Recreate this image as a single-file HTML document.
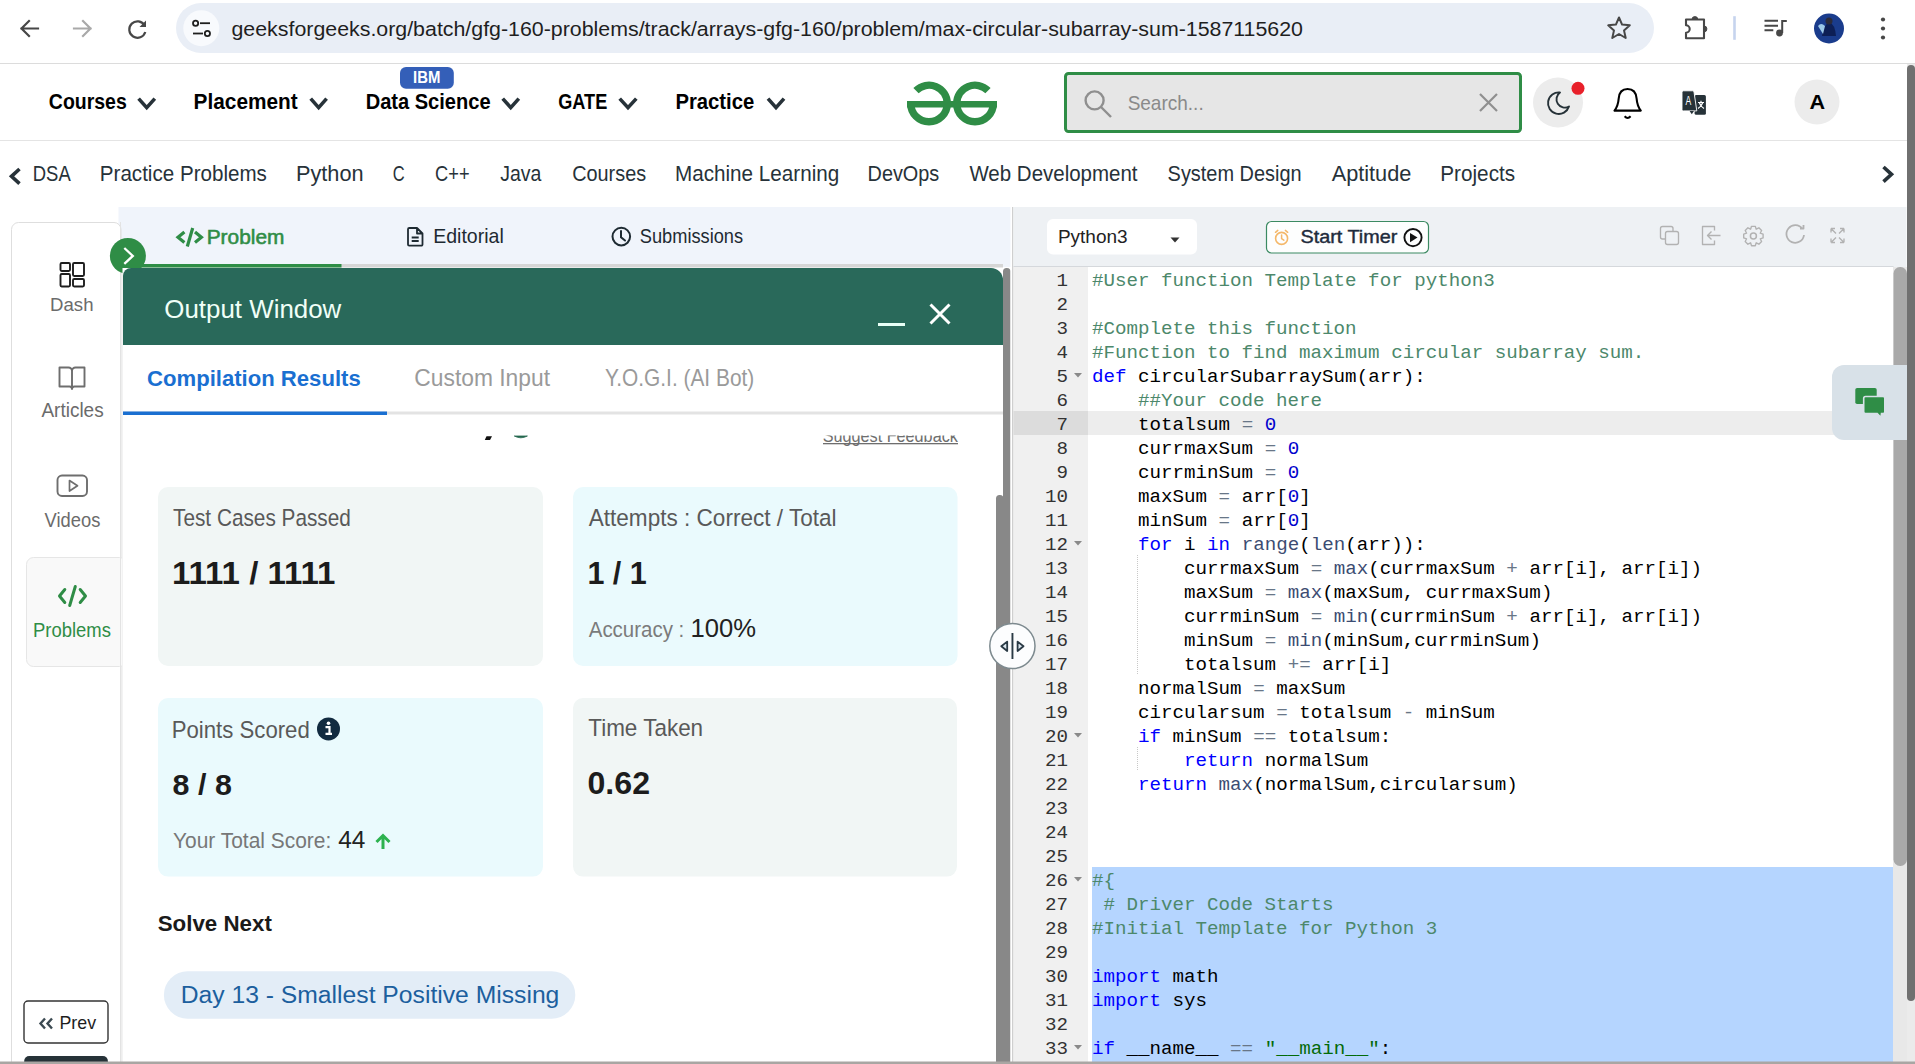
<!DOCTYPE html>
<html><head><meta charset="utf-8"><title>GfG Practice</title>
<style>html,body{margin:0;padding:0;background:#fff;overflow:hidden;width:1915px;height:1064px}svg{display:block}</style>
</head><body>
<svg width="1915" height="1064" viewBox="0 0 1915 1064">
<rect x="0" y="0" width="1915" height="1064" rx="0" fill="#ffffff" />
<rect x="0" y="63" width="1915" height="1" rx="0" fill="#dcdcdc" />
<path d="M38 28.5H21.5M29 21L21.5 28.5L29 36" fill="none" stroke="#474747" stroke-width="2.2" stroke-linecap="square" stroke-linejoin="miter"/>
<path d="M74 28.5H90.5M83 21L90.5 28.5L83 36" fill="none" stroke="#a9a9a9" stroke-width="2.2" stroke-linecap="square"/>
<path d="M144.6 25.5A8.2 8.2 0 1 0 145.3 32" fill="none" stroke="#474747" stroke-width="2.2" />
<path d="M146 20.5V27H139.5Z" fill="#474747" />
<rect x="176" y="3" width="1478" height="50" rx="25" fill="#e9eef6" />
<circle cx="201.3" cy="28.2" r="18" fill="#f8fafd" />
<circle cx="195.6" cy="23.2" r="2.6" fill="none" stroke="#1f1f1f" stroke-width="1.8" />
<path d="M200 23.2H210" fill="none" stroke="#1f1f1f" stroke-width="1.8" />
<path d="M193 33.5H203" fill="none" stroke="#1f1f1f" stroke-width="1.8" />
<circle cx="207.4" cy="33.5" r="2.6" fill="none" stroke="#1f1f1f" stroke-width="1.8" />
<text x="231.49" y="35.80" font-family='"Liberation Sans", sans-serif' font-size="21.08" font-weight="400" fill="#1f1f1f" textLength="1071.51" lengthAdjust="spacingAndGlyphs" >geeksforgeeks.org/batch/gfg-160-problems/track/arrays-gfg-160/problem/max-circular-subarray-sum-1587115620</text>
<path d="M1619 17.5L1622.1 24.6L1629.8 25.3L1624 30.4L1625.7 38L1619 34L1612.3 38L1614 30.4L1608.2 25.3L1615.9 24.6Z" fill="none" stroke="#474747" stroke-width="2" stroke-linejoin="round"/>
<path d="M1686 19.5H1704V38.2H1686V32.7A3.7 3.7 0 0 0 1686 25.3Z" fill="none" stroke="#474747" stroke-width="2.1" stroke-linejoin="round"/>
<path d="M1692 19.5A2.9 2.9 0 0 1 1697.8 19.5Z M1704 26A2.9 2.9 0 0 1 1704 31.8Z" fill="#474747" stroke="#474747" stroke-width="1" />
<rect x="1733.2" y="16.2" width="2.6" height="23.6" rx="0" fill="#c6d4ee" />
<path d="M1764.5 20.8H1778M1764.5 25.7H1778M1764.5 30.2H1773.3M1782.2 33V20.9H1786.8" fill="none" stroke="#474747" stroke-width="2" />
<circle cx="1779.5" cy="33" r="3.4" fill="#474747" />
<circle cx="1829" cy="28.5" r="15" fill="#1a3c8c" />
<path d="M1822 36Q1823 26 1829 22Q1835 24 1836 36Z" fill="#0d1f55" />
<circle cx="1829" cy="21" r="3.5" fill="#2b2b3a" />
<path d="M1818 26Q1821 22 1825 26L1823 34Z" fill="#9cc9e8" />
<circle cx="1883" cy="19.5" r="2.1" fill="#474747" />
<circle cx="1883" cy="28.5" r="2.1" fill="#474747" />
<circle cx="1883" cy="37.5" r="2.1" fill="#474747" />
<rect x="0" y="140" width="1907" height="1" rx="0" fill="#e4e4e4" />
<text x="48.82" y="108.80" font-family='"Liberation Sans", sans-serif' font-size="21.80" font-weight="700" fill="#000000" textLength="77.99" lengthAdjust="spacingAndGlyphs" >Courses</text>
<path d="M138.6 98.6L146.7 107.6L154.8 98.6" fill="none" stroke="#273239" stroke-width="3.6" />
<text x="193.60" y="108.80" font-family='"Liberation Sans", sans-serif' font-size="21.80" font-weight="700" fill="#000000" textLength="104.11" lengthAdjust="spacingAndGlyphs" >Placement</text>
<path d="M310.7 98.6L318.65 107.6L326.6 98.6" fill="none" stroke="#273239" stroke-width="3.6" />
<text x="365.64" y="108.80" font-family='"Liberation Sans", sans-serif' font-size="21.80" font-weight="700" fill="#000000" textLength="125.02" lengthAdjust="spacingAndGlyphs" >Data Science</text>
<path d="M502.7 98.6L510.75 107.6L518.8 98.6" fill="none" stroke="#273239" stroke-width="3.6" />
<text x="558.27" y="108.80" font-family='"Liberation Sans", sans-serif' font-size="21.80" font-weight="700" fill="#000000" textLength="49.03" lengthAdjust="spacingAndGlyphs" >GATE</text>
<path d="M619.7 98.6L628.0 107.6L636.3 98.6" fill="none" stroke="#273239" stroke-width="3.6" />
<text x="675.43" y="108.80" font-family='"Liberation Sans", sans-serif' font-size="21.80" font-weight="700" fill="#000000" textLength="78.86" lengthAdjust="spacingAndGlyphs" >Practice</text>
<path d="M768.0 98.6L776.0 107.6L784.0 98.6" fill="none" stroke="#273239" stroke-width="3.6" />
<rect x="400" y="66.9" width="53.8" height="21.8" rx="6" fill="#345fb8" />
<text x="413.00" y="83.00" font-family='"Liberation Sans", sans-serif' font-size="16.13" font-weight="700" fill="#ffffff" textLength="27.28" lengthAdjust="spacingAndGlyphs" >IBM</text>
<g fill="none" stroke="#2f8d46" stroke-width="7.4">
<path d="M910.7 103.5A18.3 18.3 0 0 0 947.3 103.5A18.3 18.3 0 0 0 916 90.6" fill="none" />
<path d="M993.3 103.5A18.3 18.3 0 0 1 956.7 103.5A18.3 18.3 0 0 1 988 90.6" fill="none" />
</g>
<rect x="907" y="101" width="90" height="6.5" rx="0" fill="#2f8d46" />
<rect x="1065.5" y="73.5" width="455" height="58" rx="3" fill="#e6e6e6" stroke="#2f8d46" stroke-width="3"/>
<circle cx="1094.6" cy="100.4" r="9" fill="none" stroke="#8f8f8f" stroke-width="2.4" />
<path d="M1101 107L1111 117" fill="none" stroke="#8f8f8f" stroke-width="2.4" />
<text x="1127.64" y="109.80" font-family='"Liberation Sans", sans-serif' font-size="20.06" font-weight="400" fill="#8a8a8a" textLength="76.06" lengthAdjust="spacingAndGlyphs" >Search...</text>
<path d="M1480 94L1497 111M1497 94L1480 111" fill="none" stroke="#8f8f8f" stroke-width="2.2" />
<circle cx="1558" cy="102.5" r="25" fill="#ececec" />
<path d="M1560 92.5A10.76 10.76 0 1 0 1569 106.5A8.33 8.33 0 0 1 1560 92.5Z" fill="none" stroke="#263238" stroke-width="1.9" stroke-linejoin="round"/>
<circle cx="1578" cy="88.3" r="6.5" fill="#e8202a" />
<path d="M1614.5 110.6H1640.8Q1637.2 106 1636.6 98.5Q1635.8 89 1627.6 89Q1619.4 89 1618.7 98.5Q1618.1 106 1614.5 110.6Z" fill="none" stroke="#000" stroke-width="2.1" stroke-linejoin="round"/>
<path d="M1624.6 116.3Q1627.6 119.5 1630.6 116.3" fill="none" stroke="#000" stroke-width="2" />
<rect x="1694.6" y="94.9" width="11.3" height="19.8" rx="1.5" fill="#263238" />
<path d="M1683.5 90.8H1692.6A1.5 1.5 0 0 1 1694 92L1696.8 110.9H1683.5A1.5 1.5 0 0 1 1682 109.4V92.3A1.5 1.5 0 0 1 1683.5 90.8Z" fill="#263238" stroke="#fff" stroke-width="0.9" />
<path d="M1689.6 110.9L1691.8 114.2L1694 110.9Z" fill="#263238" />
<text x="1685.48" y="105.00" font-family='"Liberation Sans", sans-serif' font-size="13.08" font-weight="400" fill="#fff" textLength="5.74" lengthAdjust="spacingAndGlyphs" >A</text>
<path d="M1698 102.5H1704M1701 100.7V102.5M1699.2 102.5Q1700.5 106.5 1704 108.5M1702.8 102.5Q1701.5 106.5 1698 108.5" fill="none" stroke="#fff" stroke-width="1.2" />
<circle cx="1817" cy="102" r="22.5" fill="#ececec" />
<text x="1809.46" y="109.00" font-family='"Liberation Sans", sans-serif' font-size="19.62" font-weight="700" fill="#000" textLength="15.63" lengthAdjust="spacingAndGlyphs" >A</text>
<rect x="0" y="207" width="1907" height="0.01" rx="0" fill="#ffffff" />
<text x="32.78" y="181.30" font-family='"Liberation Sans", sans-serif' font-size="21.80" font-weight="400" fill="#273239" textLength="37.94" lengthAdjust="spacingAndGlyphs" >DSA</text>
<text x="99.80" y="181.30" font-family='"Liberation Sans", sans-serif' font-size="21.80" font-weight="400" fill="#273239" textLength="167.10" lengthAdjust="spacingAndGlyphs" >Practice Problems</text>
<text x="295.91" y="181.30" font-family='"Liberation Sans", sans-serif' font-size="21.80" font-weight="400" fill="#273239" textLength="67.67" lengthAdjust="spacingAndGlyphs" >Python</text>
<text x="392.67" y="181.30" font-family='"Liberation Sans", sans-serif' font-size="21.80" font-weight="400" fill="#273239" textLength="11.94" lengthAdjust="spacingAndGlyphs" >C</text>
<text x="435.09" y="181.30" font-family='"Liberation Sans", sans-serif' font-size="21.80" font-weight="400" fill="#273239" textLength="34.53" lengthAdjust="spacingAndGlyphs" >C++</text>
<text x="500.31" y="181.30" font-family='"Liberation Sans", sans-serif' font-size="21.80" font-weight="400" fill="#273239" textLength="41.09" lengthAdjust="spacingAndGlyphs" >Java</text>
<text x="572.21" y="181.30" font-family='"Liberation Sans", sans-serif' font-size="21.80" font-weight="400" fill="#273239" textLength="73.91" lengthAdjust="spacingAndGlyphs" >Courses</text>
<text x="675.00" y="181.30" font-family='"Liberation Sans", sans-serif' font-size="21.80" font-weight="400" fill="#273239" textLength="164.19" lengthAdjust="spacingAndGlyphs" >Machine Learning</text>
<text x="867.56" y="181.30" font-family='"Liberation Sans", sans-serif' font-size="21.80" font-weight="400" fill="#273239" textLength="71.73" lengthAdjust="spacingAndGlyphs" >DevOps</text>
<text x="969.40" y="181.30" font-family='"Liberation Sans", sans-serif' font-size="21.80" font-weight="400" fill="#273239" textLength="168.17" lengthAdjust="spacingAndGlyphs" >Web Development</text>
<text x="1167.60" y="181.30" font-family='"Liberation Sans", sans-serif' font-size="21.80" font-weight="400" fill="#273239" textLength="134.09" lengthAdjust="spacingAndGlyphs" >System Design</text>
<text x="1331.65" y="181.30" font-family='"Liberation Sans", sans-serif' font-size="21.80" font-weight="400" fill="#273239" textLength="79.72" lengthAdjust="spacingAndGlyphs" >Aptitude</text>
<text x="1440.29" y="181.30" font-family='"Liberation Sans", sans-serif' font-size="21.80" font-weight="400" fill="#273239" textLength="74.83" lengthAdjust="spacingAndGlyphs" >Projects</text>
<path d="M19.5 169L11.5 176.3L19.5 183.6" fill="none" stroke="#273239" stroke-width="3.6" />
<path d="M1883.5 167L1891.5 174.3L1883.5 181.6" fill="none" stroke="#273239" stroke-width="3.6" />
<rect x="1907" y="64" width="8" height="1000" rx="0" fill="#ebebeb" />
<rect x="1907" y="65" width="8" height="936" rx="4" fill="#707070" />
<rect x="118.5" y="207" width="893.5" height="60" rx="0" fill="#f0f4fb" />
<rect x="11.5" y="222.5" width="109.5" height="850" rx="7" fill="#ffffff" stroke="#dedede" stroke-width="1"/>
<g fill="none" stroke="#1e1e1e" stroke-width="1.9">
<rect x="60.5" y="263" width="9.5" height="8" rx="1.2" fill="none" />
<rect x="73" y="263" width="11" height="13" rx="1.2" fill="none" />
<rect x="60.5" y="274" width="9.5" height="12.5" rx="1.2" fill="none" />
<rect x="73" y="279" width="11" height="7.5" rx="1.2" fill="none" />
</g>
<text x="50.07" y="311.30" font-family='"Liberation Sans", sans-serif' font-size="18.90" font-weight="400" fill="#6b6b6b" textLength="43.44" lengthAdjust="spacingAndGlyphs" >Dash</text>
<path d="M59.5 367.5H68.5A3.5 3.5 0 0 1 72 371V389A2.5 2.5 0 0 0 69.5 386.5H59.5Z M84.5 367.5H75.5A3.5 3.5 0 0 0 72 371V389A2.5 2.5 0 0 1 74.5 386.5H84.5Z" fill="none" stroke="#6e6e6e" stroke-width="1.9" stroke-linejoin="round"/>
<text x="41.45" y="416.70" font-family='"Liberation Sans", sans-serif' font-size="19.48" font-weight="400" fill="#6b6b6b" textLength="62.23" lengthAdjust="spacingAndGlyphs" >Articles</text>
<rect x="57.5" y="475.5" width="29.5" height="20.5" rx="4.5" fill="none" stroke="#6e6e6e" stroke-width="1.9"/>
<path d="M69.5 480.5L77.5 485.7L69.5 491Z" fill="none" stroke="#6e6e6e" stroke-width="1.7" stroke-linejoin="round"/>
<text x="44.61" y="527.00" font-family='"Liberation Sans", sans-serif' font-size="21.08" font-weight="400" fill="#6b6b6b" textLength="55.73" lengthAdjust="spacingAndGlyphs" >Videos</text>
<rect x="26.5" y="557.5" width="100" height="109" rx="7" fill="#f9f9f9" stroke="#e6e6e6" stroke-width="1"/>
<path d="M64.8 589.5L59.5 596L64.8 602.5 M80.2 589.5L85.5 596L80.2 602.5 M75.3 586.5L69.7 605.5" fill="none" stroke="#2f8d46" stroke-width="3" stroke-linecap="round" stroke-linejoin="round"/>
<text x="32.98" y="637.10" font-family='"Liberation Sans", sans-serif' font-size="19.48" font-weight="400" fill="#2f8d46" textLength="77.89" lengthAdjust="spacingAndGlyphs" >Problems</text>
<rect x="24" y="1001" width="84" height="42" rx="4" fill="#ffffff" stroke="#333" stroke-width="1.4"/>
<path d="M45 1018.5L40.5 1023.5L45 1028.5 M52 1018.5L47.5 1023.5L52 1028.5" fill="none" stroke="#3c4a52" stroke-width="2.4" />
<text x="59.43" y="1028.70" font-family='"Liberation Sans", sans-serif' font-size="17.88" font-weight="400" fill="#1e1e1e" textLength="36.64" lengthAdjust="spacingAndGlyphs" >Prev</text>
<rect x="24.2" y="1056" width="83.7" height="12" rx="5" fill="#263238" />
<rect x="120" y="222" width="1" height="860" rx="0" fill="#e3e3e3" />
<rect x="122" y="268" width="1" height="800" rx="0" fill="#e6e6e6" />
<rect x="122" y="264" width="881" height="3.5" rx="0" fill="#d6d6d6" />
<rect x="122" y="264" width="219.5" height="3.5" rx="0" fill="#2f8d46" />
<path d="M184.4 232L178 237.3L184.4 242.5 M195 232L201.4 237.3L195 242.5" fill="none" stroke="#2f8d46" stroke-width="3.2" stroke-linejoin="miter"/>
<path d="M192.7 228L187.3 246.5" fill="none" stroke="#2f8d46" stroke-width="3.2" />
<text x="206.68" y="243.90" font-family='"Liberation Sans", sans-serif' font-size="19.77" font-weight="400" fill="#2f8d46" textLength="77.70" lengthAdjust="spacingAndGlyphs" stroke="#2f8d46" stroke-width="0.55">Problem</text>
<path d="M409 228H417L422.5 233.5V244.5A1.2 1.2 0 0 1 421.3 245.7H409.2A1.2 1.2 0 0 1 408 244.5V229.2A1.2 1.2 0 0 1 409.2 228Z M417 228V233.5H422.5 M411.7 237.5H418.7 M411.7 241H418.7" fill="none" stroke="#1e2a32" stroke-width="1.8" stroke-linejoin="round"/>
<text x="433.19" y="243.20" font-family='"Liberation Sans", sans-serif' font-size="19.62" font-weight="400" fill="#1e2a32" textLength="70.54" lengthAdjust="spacingAndGlyphs" >Editorial</text>
<circle cx="621.3" cy="236.6" r="8.8" fill="none" stroke="#1e2a32" stroke-width="2" />
<path d="M621 231V237.2L625 240.5" fill="none" stroke="#1e2a32" stroke-width="2" stroke-linecap="round"/>
<text x="639.78" y="243.20" font-family='"Liberation Sans", sans-serif' font-size="19.62" font-weight="400" fill="#1e2a32" textLength="103.34" lengthAdjust="spacingAndGlyphs" >Submissions</text>
<circle cx="127.9" cy="255.9" r="18" fill="#2f8d46" />
<path d="M124.3 248L132.8 255.9L124.3 263.8" fill="none" stroke="#ffffff" stroke-width="2.3" />
<rect x="122.5" y="268" width="880.5" height="800" rx="0" fill="#ffffff" />
<path d="M123 345V276A8 8 0 0 1 131 268H991A12 12 0 0 1 1003 280V345Z" fill="#29695a" />
<text x="164.27" y="317.80" font-family='"Liberation Sans", sans-serif' font-size="25.87" font-weight="400" fill="#f0fff7" textLength="177.04" lengthAdjust="spacingAndGlyphs" >Output Window</text>
<rect x="878" y="323" width="27" height="3" rx="0" fill="#e8fff6" />
<path d="M930.5 304.5L949.5 323.5M949.5 304.5L930.5 323.5" fill="none" stroke="#ffffff" stroke-width="3" />
<text x="147.12" y="385.70" font-family='"Liberation Sans", sans-serif' font-size="22.82" font-weight="700" fill="#1a6fd1" textLength="213.57" lengthAdjust="spacingAndGlyphs" >Compilation Results</text>
<text x="414.36" y="386.40" font-family='"Liberation Sans", sans-serif' font-size="23.84" font-weight="400" fill="#9a9a9a" textLength="135.61" lengthAdjust="spacingAndGlyphs" >Custom Input</text>
<text x="605.03" y="386.40" font-family='"Liberation Sans", sans-serif' font-size="23.84" font-weight="400" fill="#9a9a9a" textLength="149.23" lengthAdjust="spacingAndGlyphs" >Y.O.G.I. (AI Bot)</text>
<rect x="123" y="411.5" width="880" height="3" rx="0" fill="#e3e3e3" />
<rect x="123" y="411.5" width="264" height="3.5" rx="0" fill="#1a6fd1" />
<clipPath id="cp1"><rect x="123" y="435.5" width="880" height="40"/></clipPath>
<g clip-path="url(#cp1)">
<text x="822.67" y="441.70" font-family='"Liberation Sans", sans-serif' font-size="17.73" font-weight="400" fill="#6e6e6e" textLength="135.22" lengthAdjust="spacingAndGlyphs" >Suggest Feedback</text>
<rect x="823" y="443" width="135" height="1.3" rx="0" fill="#6e6e6e" />
</g>
<path d="M486.5 436.2H492L490 440H484.8Z" fill="#111" />
<path d="M514.3 436Q520.8 439.6 527.4 436Z" fill="#25684f" stroke="#25684f" stroke-width="0.8" />
<rect x="158" y="487" width="385" height="179" rx="10" fill="#f1f6f5" />
<rect x="573" y="487" width="384.5" height="179" rx="10" fill="#eafafd" />
<rect x="158" y="698" width="385" height="178.6" rx="10" fill="#eafafd" />
<rect x="573" y="698" width="384" height="178.6" rx="10" fill="#f1f6f5" />
<text x="173.03" y="526.00" font-family='"Liberation Sans", sans-serif' font-size="23.69" font-weight="400" fill="#595959" textLength="177.81" lengthAdjust="spacingAndGlyphs" >Test Cases Passed</text>
<text x="171.94" y="584.20" font-family='"Liberation Sans", sans-serif' font-size="31.10" font-weight="700" fill="#1c1c1c" textLength="163.56" lengthAdjust="spacingAndGlyphs" >1111 / 1111</text>
<text x="588.74" y="526.00" font-family='"Liberation Sans", sans-serif' font-size="23.69" font-weight="400" fill="#595959" textLength="247.80" lengthAdjust="spacingAndGlyphs" >Attempts : Correct / Total</text>
<text x="587.39" y="584.20" font-family='"Liberation Sans", sans-serif' font-size="31.10" font-weight="700" fill="#1c1c1c" textLength="59.40" lengthAdjust="spacingAndGlyphs" >1 / 1</text>
<text x="588.75" y="636.70" font-family='"Liberation Sans", sans-serif' font-size="22.82" font-weight="400" fill="#7b7b7b" textLength="95.50" lengthAdjust="spacingAndGlyphs" >Accuracy :</text>
<text x="690.58" y="636.70" font-family='"Liberation Sans", sans-serif' font-size="25.00" font-weight="400" fill="#222222" textLength="65.52" lengthAdjust="spacingAndGlyphs" >100%</text>
<text x="171.67" y="738.10" font-family='"Liberation Sans", sans-serif' font-size="23.69" font-weight="400" fill="#595959" textLength="138.13" lengthAdjust="spacingAndGlyphs" >Points Scored</text>
<circle cx="328.5" cy="728.9" r="11.5" fill="#122b40" />
<circle cx="328.5" cy="723.3" r="1.8" fill="#fff" />
<path d="M325.5 727.2H329.5V733.5M325.5 733.8H332" fill="none" stroke="#fff" stroke-width="2.2" />
<text x="172.59" y="795.30" font-family='"Liberation Sans", sans-serif' font-size="29.51" font-weight="700" fill="#1c1c1c" textLength="59.25" lengthAdjust="spacingAndGlyphs" >8 / 8</text>
<text x="173.03" y="847.70" font-family='"Liberation Sans", sans-serif' font-size="21.80" font-weight="400" fill="#777777" textLength="158.27" lengthAdjust="spacingAndGlyphs" >Your Total Score:</text>
<text x="338.25" y="847.70" font-family='"Liberation Sans", sans-serif' font-size="23.26" font-weight="400" fill="#222222" textLength="27.18" lengthAdjust="spacingAndGlyphs" >44</text>
<path d="M383 849V836M376.5 842L383 835.5L389.5 842" fill="none" stroke="#2db24f" stroke-width="3" />
<text x="588.29" y="736.00" font-family='"Liberation Sans", sans-serif' font-size="23.69" font-weight="400" fill="#595959" textLength="114.83" lengthAdjust="spacingAndGlyphs" >Time Taken</text>
<text x="587.51" y="793.80" font-family='"Liberation Sans", sans-serif' font-size="30.52" font-weight="700" fill="#1c1c1c" textLength="62.53" lengthAdjust="spacingAndGlyphs" >0.62</text>
<text x="157.69" y="930.80" font-family='"Liberation Sans", sans-serif' font-size="22.38" font-weight="700" fill="#1a1a1a" textLength="114.16" lengthAdjust="spacingAndGlyphs" >Solve Next</text>
<rect x="163.9" y="971.2" width="411.4" height="47.5" rx="23.75" fill="#e3edf7" />
<text x="180.66" y="1002.50" font-family='"Liberation Sans", sans-serif' font-size="23.98" font-weight="400" fill="#1c5f9e" textLength="378.71" lengthAdjust="spacingAndGlyphs" >Day 13 - Smallest Positive Missing</text>
<rect x="1003" y="268" width="7.5" height="800" rx="3.5" fill="#888888" />
<rect x="996" y="495" width="7.5" height="600" rx="3.5" fill="#888888" />
<rect x="1010.5" y="207" width="1.5" height="860" rx="0" fill="#ffffff" />
<rect x="1012" y="207" width="1.5" height="860" rx="0" fill="#cfcfcf" />
<rect x="1013.5" y="207" width="893" height="60" rx="0" fill="#eef1f4" />
<path d="M1013.5 207H1898A8 8 0 0 1 1906 215V266H1013.5Z" fill="#eef1f4" />
<rect x="1013.5" y="266" width="880" height="1" rx="0" fill="#d5d8dc" />
<rect x="1047" y="219" width="150" height="35.5" rx="6" fill="#ffffff" />
<text x="1057.93" y="243.00" font-family='"Liberation Sans", sans-serif' font-size="18.46" font-weight="400" fill="#222222" textLength="69.71" lengthAdjust="spacingAndGlyphs" >Python3</text>
<path d="M1170.5 237.5H1179.5L1175 242.5Z" fill="#333" />
<rect x="1266.5" y="221.5" width="162" height="31.5" rx="5" fill="#fdfefe" stroke="#3b8a62" stroke-width="1.2"/>
<circle cx="1281.6" cy="238.4" r="6" fill="none" stroke="#f4b86a" stroke-width="1.6" />
<path d="M1281.6 235V238.6L1283.8 240.2 M1275.5 232.3L1277.8 230.4 M1287.7 232.3L1285.4 230.4" fill="none" stroke="#f4b86a" stroke-width="1.5" stroke-linecap="round"/>
<text x="1300.51" y="243.00" font-family='"Liberation Sans", sans-serif' font-size="17.88" font-weight="400" fill="#1e2b3c" textLength="96.78" lengthAdjust="spacingAndGlyphs" stroke="#1e2b3c" stroke-width="0.4">Start Timer</text>
<circle cx="1413" cy="237.6" r="8.6" fill="none" stroke="#111" stroke-width="1.9" />
<path d="M1410 233L1417.5 237.6L1410 242.2Z" fill="#111" />
<g fill="none" stroke="#b2b2b2" stroke-width="1.35" stroke-linejoin="round">
<rect x="1660.5" y="226.5" width="12.5" height="12.5" rx="2" fill="none" />
<rect x="1665.5" y="231.5" width="13" height="13" rx="2" fill="#eef1f4" />
<path d="M1714.5 230.5V226.5H1702.5V244.5H1714.5V240.5 M1720.5 235.5H1707.5 M1711.5 231.5L1707.5 235.5L1711.5 239.5" fill="none" />
<path d="M1751.5 226.3L1755.3 226.3L1756.2 229.2L1758.9 227.8L1761.6 230.5L1760.2 233.2L1763.1 234.1V237.9L1760.2 238.8L1761.6 241.5L1758.9 244.2L1756.2 242.8L1755.3 245.7H1751.5L1750.6 242.8L1747.9 244.2L1745.2 241.5L1746.6 238.8L1743.7 237.9V234.1L1746.6 233.2L1745.2 230.5L1747.9 227.8L1750.6 229.2Z" fill="none" />
<circle cx="1753.4" cy="236" r="3" fill="none" stroke="#b2b2b2" stroke-width="1.5" />
<path d="M1802.5 229A8.8 8.8 0 1 0 1804 235 M1800 228.5H1803.5V225" fill="none" stroke-width="1.8"/>
<path d="M1831 228.5L1836 233.5M1831 228.5V232.5M1831 228.5H1835 M1844 228.5L1839 233.5M1844 228.5V232.5M1844 228.5H1840 M1831 242.5L1836 237.5M1831 242.5V238.5M1831 242.5H1835 M1844 242.5L1839 237.5M1844 242.5V238.5M1844 242.5H1840" fill="none" />
</g>
<rect x="1013.5" y="267" width="74.5" height="800" rx="0" fill="#f0f0f0" />
<rect x="1088" y="267" width="805" height="800" rx="0" fill="#ffffff" />
<rect x="1013.5" y="411" width="74.5" height="24" rx="0" fill="#dcdcdc" />
<rect x="1088" y="411" width="805" height="24" rx="0" fill="#ededed" />
<rect x="1092" y="867" width="801" height="200" rx="0" fill="#b5d5ff" />
<line x1="1137.5" y1="555" x2="1137.5" y2="579" stroke="#c8c8c8" stroke-width="1" stroke-dasharray="1 1"/>
<line x1="1137.5" y1="579" x2="1137.5" y2="603" stroke="#c8c8c8" stroke-width="1" stroke-dasharray="1 1"/>
<line x1="1137.5" y1="603" x2="1137.5" y2="627" stroke="#c8c8c8" stroke-width="1" stroke-dasharray="1 1"/>
<line x1="1137.5" y1="627" x2="1137.5" y2="651" stroke="#c8c8c8" stroke-width="1" stroke-dasharray="1 1"/>
<line x1="1137.5" y1="651" x2="1137.5" y2="675" stroke="#c8c8c8" stroke-width="1" stroke-dasharray="1 1"/>
<line x1="1137.5" y1="747" x2="1137.5" y2="771" stroke="#c8c8c8" stroke-width="1" stroke-dasharray="1 1"/>
<g font-family='"Liberation Mono", monospace' font-size="19.18" style="white-space:pre">
<text x="1068" y="285.8" text-anchor="end" fill="#333333">1</text>
<text y="285.8"><tspan x="1092.00" fill="rgb(76,136,107)">#User function Template for python3</tspan></text>
<text x="1068" y="309.8" text-anchor="end" fill="#333333">2</text>
<text x="1068" y="333.8" text-anchor="end" fill="#333333">3</text>
<text y="333.8"><tspan x="1092.00" fill="rgb(76,136,107)">#Complete this function</tspan></text>
<text x="1068" y="357.8" text-anchor="end" fill="#333333">4</text>
<text y="357.8"><tspan x="1092.00" fill="rgb(76,136,107)">#Function to find maximum circular subarray sum.</tspan></text>
<text x="1068" y="381.8" text-anchor="end" fill="#333333">5</text>
<text y="381.8"><tspan x="1092.00" fill="rgb(0,0,255)">def</tspan><tspan x="1138.04" fill="#000000">circularSubarraySum</tspan><tspan x="1356.73" fill="#000000">(</tspan><tspan x="1368.24" fill="#000000">arr</tspan><tspan x="1402.77" fill="#000000">)</tspan><tspan x="1414.28" fill="#000000">:</tspan></text>
<path d="M1074 373H1082L1078 377.5Z" fill="#8a8a8a"/>
<text x="1068" y="405.8" text-anchor="end" fill="#333333">6</text>
<text y="405.8"><tspan x="1138.04" fill="rgb(76,136,107)">##Your code here</tspan></text>
<text x="1068" y="429.8" text-anchor="end" fill="#333333">7</text>
<text y="429.8"><tspan x="1138.04" fill="#000000">totalsum</tspan><tspan x="1241.63" fill="rgb(104,118,135)">=</tspan><tspan x="1264.65" fill="rgb(0,0,205)">0</tspan></text>
<text x="1068" y="453.8" text-anchor="end" fill="#333333">8</text>
<text y="453.8"><tspan x="1138.04" fill="#000000">currmaxSum</tspan><tspan x="1264.65" fill="rgb(104,118,135)">=</tspan><tspan x="1287.67" fill="rgb(0,0,205)">0</tspan></text>
<text x="1068" y="477.8" text-anchor="end" fill="#333333">9</text>
<text y="477.8"><tspan x="1138.04" fill="#000000">currminSum</tspan><tspan x="1264.65" fill="rgb(104,118,135)">=</tspan><tspan x="1287.67" fill="rgb(0,0,205)">0</tspan></text>
<text x="1068" y="501.8" text-anchor="end" fill="#333333">10</text>
<text y="501.8"><tspan x="1138.04" fill="#000000">maxSum</tspan><tspan x="1218.61" fill="rgb(104,118,135)">=</tspan><tspan x="1241.63" fill="#000000">arr</tspan><tspan x="1276.16" fill="#000000">[</tspan><tspan x="1287.67" fill="rgb(0,0,205)">0</tspan><tspan x="1299.18" fill="#000000">]</tspan></text>
<text x="1068" y="525.8" text-anchor="end" fill="#333333">11</text>
<text y="525.8"><tspan x="1138.04" fill="#000000">minSum</tspan><tspan x="1218.61" fill="rgb(104,118,135)">=</tspan><tspan x="1241.63" fill="#000000">arr</tspan><tspan x="1276.16" fill="#000000">[</tspan><tspan x="1287.67" fill="rgb(0,0,205)">0</tspan><tspan x="1299.18" fill="#000000">]</tspan></text>
<text x="1068" y="549.8" text-anchor="end" fill="#333333">12</text>
<text y="549.8"><tspan x="1138.04" fill="rgb(0,0,255)">for</tspan><tspan x="1184.08" fill="#000000">i</tspan><tspan x="1207.10" fill="rgb(0,0,255)">in</tspan><tspan x="1241.63" fill="rgb(60,76,114)">range</tspan><tspan x="1299.18" fill="#000000">(</tspan><tspan x="1310.69" fill="rgb(60,76,114)">len</tspan><tspan x="1345.22" fill="#000000">(</tspan><tspan x="1356.73" fill="#000000">arr</tspan><tspan x="1391.26" fill="#000000">)</tspan><tspan x="1402.77" fill="#000000">)</tspan><tspan x="1414.28" fill="#000000">:</tspan></text>
<path d="M1074 541H1082L1078 545.5Z" fill="#8a8a8a"/>
<text x="1068" y="573.8" text-anchor="end" fill="#333333">13</text>
<text y="573.8"><tspan x="1184.08" fill="#000000">currmaxSum</tspan><tspan x="1310.69" fill="rgb(104,118,135)">=</tspan><tspan x="1333.71" fill="rgb(60,76,114)">max</tspan><tspan x="1368.24" fill="#000000">(</tspan><tspan x="1379.75" fill="#000000">currmaxSum</tspan><tspan x="1506.36" fill="rgb(104,118,135)">+</tspan><tspan x="1529.38" fill="#000000">arr</tspan><tspan x="1563.91" fill="#000000">[</tspan><tspan x="1575.42" fill="#000000">i</tspan><tspan x="1586.93" fill="#000000">]</tspan><tspan x="1598.44" fill="#000000">,</tspan><tspan x="1621.46" fill="#000000">arr</tspan><tspan x="1655.99" fill="#000000">[</tspan><tspan x="1667.50" fill="#000000">i</tspan><tspan x="1679.01" fill="#000000">]</tspan><tspan x="1690.52" fill="#000000">)</tspan></text>
<text x="1068" y="597.8" text-anchor="end" fill="#333333">14</text>
<text y="597.8"><tspan x="1184.08" fill="#000000">maxSum</tspan><tspan x="1264.65" fill="rgb(104,118,135)">=</tspan><tspan x="1287.67" fill="rgb(60,76,114)">max</tspan><tspan x="1322.20" fill="#000000">(</tspan><tspan x="1333.71" fill="#000000">maxSum</tspan><tspan x="1402.77" fill="#000000">,</tspan><tspan x="1425.79" fill="#000000">currmaxSum</tspan><tspan x="1540.89" fill="#000000">)</tspan></text>
<text x="1068" y="621.8" text-anchor="end" fill="#333333">15</text>
<text y="621.8"><tspan x="1184.08" fill="#000000">currminSum</tspan><tspan x="1310.69" fill="rgb(104,118,135)">=</tspan><tspan x="1333.71" fill="rgb(60,76,114)">min</tspan><tspan x="1368.24" fill="#000000">(</tspan><tspan x="1379.75" fill="#000000">currminSum</tspan><tspan x="1506.36" fill="rgb(104,118,135)">+</tspan><tspan x="1529.38" fill="#000000">arr</tspan><tspan x="1563.91" fill="#000000">[</tspan><tspan x="1575.42" fill="#000000">i</tspan><tspan x="1586.93" fill="#000000">]</tspan><tspan x="1598.44" fill="#000000">,</tspan><tspan x="1621.46" fill="#000000">arr</tspan><tspan x="1655.99" fill="#000000">[</tspan><tspan x="1667.50" fill="#000000">i</tspan><tspan x="1679.01" fill="#000000">]</tspan><tspan x="1690.52" fill="#000000">)</tspan></text>
<text x="1068" y="645.8" text-anchor="end" fill="#333333">16</text>
<text y="645.8"><tspan x="1184.08" fill="#000000">minSum</tspan><tspan x="1264.65" fill="rgb(104,118,135)">=</tspan><tspan x="1287.67" fill="rgb(60,76,114)">min</tspan><tspan x="1322.20" fill="#000000">(</tspan><tspan x="1333.71" fill="#000000">minSum</tspan><tspan x="1402.77" fill="#000000">,</tspan><tspan x="1414.28" fill="#000000">currminSum</tspan><tspan x="1529.38" fill="#000000">)</tspan></text>
<text x="1068" y="669.8" text-anchor="end" fill="#333333">17</text>
<text y="669.8"><tspan x="1184.08" fill="#000000">totalsum</tspan><tspan x="1287.67" fill="rgb(104,118,135)">+=</tspan><tspan x="1322.20" fill="#000000">arr</tspan><tspan x="1356.73" fill="#000000">[</tspan><tspan x="1368.24" fill="#000000">i</tspan><tspan x="1379.75" fill="#000000">]</tspan></text>
<text x="1068" y="693.8" text-anchor="end" fill="#333333">18</text>
<text y="693.8"><tspan x="1138.04" fill="#000000">normalSum</tspan><tspan x="1253.14" fill="rgb(104,118,135)">=</tspan><tspan x="1276.16" fill="#000000">maxSum</tspan></text>
<text x="1068" y="717.8" text-anchor="end" fill="#333333">19</text>
<text y="717.8"><tspan x="1138.04" fill="#000000">circularsum</tspan><tspan x="1276.16" fill="rgb(104,118,135)">=</tspan><tspan x="1299.18" fill="#000000">totalsum</tspan><tspan x="1402.77" fill="rgb(104,118,135)">-</tspan><tspan x="1425.79" fill="#000000">minSum</tspan></text>
<text x="1068" y="741.8" text-anchor="end" fill="#333333">20</text>
<text y="741.8"><tspan x="1138.04" fill="rgb(0,0,255)">if</tspan><tspan x="1172.57" fill="#000000">minSum</tspan><tspan x="1253.14" fill="rgb(104,118,135)">==</tspan><tspan x="1287.67" fill="#000000">totalsum</tspan><tspan x="1379.75" fill="#000000">:</tspan></text>
<path d="M1074 733H1082L1078 737.5Z" fill="#8a8a8a"/>
<text x="1068" y="765.8" text-anchor="end" fill="#333333">21</text>
<text y="765.8"><tspan x="1184.08" fill="rgb(0,0,255)">return</tspan><tspan x="1264.65" fill="#000000">normalSum</tspan></text>
<text x="1068" y="789.8" text-anchor="end" fill="#333333">22</text>
<text y="789.8"><tspan x="1138.04" fill="rgb(0,0,255)">return</tspan><tspan x="1218.61" fill="rgb(60,76,114)">max</tspan><tspan x="1253.14" fill="#000000">(</tspan><tspan x="1264.65" fill="#000000">normalSum</tspan><tspan x="1368.24" fill="#000000">,</tspan><tspan x="1379.75" fill="#000000">circularsum</tspan><tspan x="1506.36" fill="#000000">)</tspan></text>
<text x="1068" y="813.8" text-anchor="end" fill="#333333">23</text>
<text x="1068" y="837.8" text-anchor="end" fill="#333333">24</text>
<text x="1068" y="861.8" text-anchor="end" fill="#333333">25</text>
<text x="1068" y="885.8" text-anchor="end" fill="#333333">26</text>
<text y="885.8"><tspan x="1092.00" fill="rgb(76,136,107)">#{</tspan></text>
<path d="M1074 877H1082L1078 881.5Z" fill="#8a8a8a"/>
<text x="1068" y="909.8" text-anchor="end" fill="#333333">27</text>
<text y="909.8"><tspan x="1103.51" fill="rgb(76,136,107)"># Driver Code Starts</tspan></text>
<text x="1068" y="933.8" text-anchor="end" fill="#333333">28</text>
<text y="933.8"><tspan x="1092.00" fill="rgb(76,136,107)">#Initial Template for Python 3</tspan></text>
<text x="1068" y="957.8" text-anchor="end" fill="#333333">29</text>
<text x="1068" y="981.8" text-anchor="end" fill="#333333">30</text>
<text y="981.8"><tspan x="1092.00" fill="rgb(0,0,255)">import</tspan><tspan x="1172.57" fill="#000000">math</tspan></text>
<text x="1068" y="1005.8" text-anchor="end" fill="#333333">31</text>
<text y="1005.8"><tspan x="1092.00" fill="rgb(0,0,255)">import</tspan><tspan x="1172.57" fill="#000000">sys</tspan></text>
<text x="1068" y="1029.8" text-anchor="end" fill="#333333">32</text>
<text x="1068" y="1053.8" text-anchor="end" fill="#333333">33</text>
<text y="1053.8"><tspan x="1092.00" fill="rgb(0,0,255)">if</tspan><tspan x="1126.53" fill="#000000">__name__</tspan><tspan x="1230.12" fill="rgb(104,118,135)">==</tspan><tspan x="1264.65" fill="rgb(3,106,7)">&quot;__main__&quot;</tspan><tspan x="1379.75" fill="#000000">:</tspan></text>
<path d="M1074 1045H1082L1078 1049.5Z" fill="#8a8a8a"/>
</g>
<rect x="1893" y="267" width="14" height="800" rx="0" fill="#e8e8e8" />
<rect x="1893.5" y="267" width="13.5" height="599" rx="6.5" fill="#a9a9a9" />
<path d="M1844 365H1907V440H1844A12 12 0 0 1 1832 428V377A12 12 0 0 1 1844 365Z" fill="#d8e1e8" />
<rect x="1855.3" y="388" width="21.4" height="16" rx="1.8" fill="#2f8d46" />
<path d="M1865.5 396.5H1883A1.8 1.8 0 0 1 1884.8 398.3V411.7A1.8 1.8 0 0 1 1883 413.5H1881.5L1881 417.5L1877.2 413.5H1865.5A1.8 1.8 0 0 1 1863.7 411.7V398.3A1.8 1.8 0 0 1 1865.5 396.5Z" fill="#2f8d46" stroke="#d8e1e8" stroke-width="1.6" />
<circle cx="1012.4" cy="646" r="22.6" fill="#fcfdfe" stroke="#7d8a8f" stroke-width="1.5" />
<path d="M1007.2 641.6L1001.3 646.3L1007.2 651Z M1017.6 641.6L1023.5 646.3L1017.6 651Z" fill="#dbe6ee" stroke="#2a3a45" stroke-width="1.8" stroke-linejoin="round"/>
<rect x="1011.5" y="633" width="1.9" height="26" rx="0" fill="#2a3a45" />
<rect x="0" y="1061.5" width="1915" height="3" rx="0" fill="#a9a6a3" />
</svg>
</body></html>
